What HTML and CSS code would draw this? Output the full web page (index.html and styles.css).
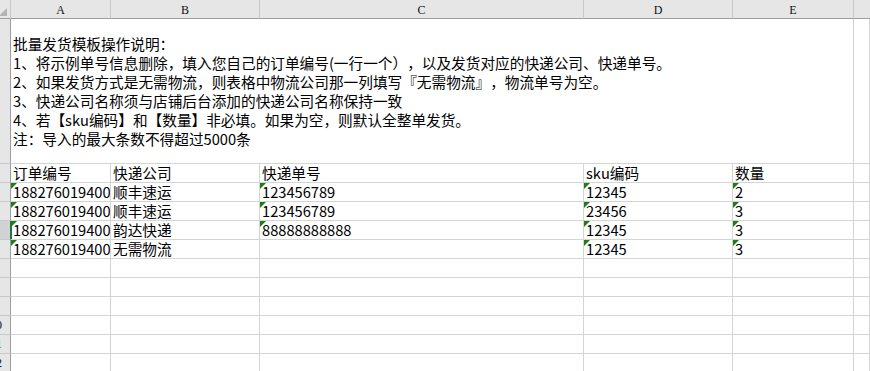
FILE: index.html
```html
<!DOCTYPE html>
<html lang="zh-CN">
<head>
<meta charset="utf-8">
<title>批量发货模板</title>
<link rel="stylesheet" href="styles.css">
</head>
<body>
<div class="viewport">
  <div class="sheet">
    <!-- column header row -->
    <div class="corner"><svg class="corner-tri" width="8" height="8" viewBox="0 0 8 8"><polygon points="8,0 8,8 0,8" fill="#b3b3b3"/></svg></div>
    <div class="colhead">A</div>
    <div class="colhead">B</div>
    <div class="colhead">C</div>
    <div class="colhead">D</div>
    <div class="colhead">E</div>
    <div class="colhead colhead-last"></div>

    <!-- row 1 -->
    <div class="rowhead tall">1</div>
    <div class="cell merged">
      <div class="notes">
        <div>批量发货模板操作说明：</div>
        <div>1、将示例单号信息删除，填入您自己的订单编号(一行一个），以及发货对应的快递公司、快递单号。</div>
        <div>2、如果发货方式是无需物流，则表格中物流公司那一列填写『无需物流』，物流单号为空。</div>
        <div>3、快递公司名称须与店铺后台添加的快递公司名称保持一致</div>
        <div>4、若【sku编码】和【数量】非必填。如果为空，则默认全整单发货。</div>
        <div>注：导入的最大条数不得超过5000条</div>
      </div>
    </div>
    <div class="cell"></div>

    <!-- row 2 -->
    <div class="rowhead">2</div>
    <div class="cell">订单编号</div>
    <div class="cell">快递公司</div>
    <div class="cell">快递单号</div>
    <div class="cell">sku编码</div>
    <div class="cell">数量</div>
    <div class="cell"></div>

    <!-- row 3 -->
    <div class="rowhead">3</div>
    <div class="cell txt">188276019400</div>
    <div class="cell">顺丰速运</div>
    <div class="cell txt">123456789</div>
    <div class="cell txt">12345</div>
    <div class="cell txt">2</div>
    <div class="cell"></div>

    <!-- row 4 -->
    <div class="rowhead">4</div>
    <div class="cell txt">188276019400</div>
    <div class="cell">顺丰速运</div>
    <div class="cell txt">123456789</div>
    <div class="cell txt">23456</div>
    <div class="cell txt">3</div>
    <div class="cell"></div>

    <!-- row 5 (active) -->
    <div class="rowhead active">5</div>
    <div class="cell txt active-cell">188276019400</div>
    <div class="cell">韵达快递</div>
    <div class="cell txt">88888888888</div>
    <div class="cell txt">12345</div>
    <div class="cell txt">3</div>
    <div class="cell"></div>

    <!-- row 6 -->
    <div class="rowhead">6</div>
    <div class="cell txt">188276019400</div>
    <div class="cell">无需物流</div>
    <div class="cell"></div>
    <div class="cell txt">12345</div>
    <div class="cell txt">3</div>
    <div class="cell"></div>

    <div class="rowhead">7</div>
    <div class="cell"></div><div class="cell"></div><div class="cell"></div><div class="cell"></div><div class="cell"></div><div class="cell"></div>
    <div class="rowhead">8</div>
    <div class="cell"></div><div class="cell"></div><div class="cell"></div><div class="cell"></div><div class="cell"></div><div class="cell"></div>
    <div class="rowhead">9</div>
    <div class="cell"></div><div class="cell"></div><div class="cell"></div><div class="cell"></div><div class="cell"></div><div class="cell"></div>
    <div class="rowhead">10</div>
    <div class="cell"></div><div class="cell"></div><div class="cell"></div><div class="cell"></div><div class="cell"></div><div class="cell"></div>
    <div class="rowhead">11</div>
    <div class="cell"></div><div class="cell"></div><div class="cell"></div><div class="cell"></div><div class="cell"></div><div class="cell"></div>
    <div class="rowhead">12</div>
    <div class="cell"></div><div class="cell"></div><div class="cell"></div><div class="cell"></div><div class="cell"></div><div class="cell"></div>
  </div>
</div>
</body>
</html>
```
FILE: styles.css
```css
* {
  box-sizing: border-box;
}

html, body {
  margin: 0;
  padding: 0;
  background: #ffffff;
}

.viewport {
  width: 870px;
  height: 371px;
  overflow: hidden;
}

.sheet {
  margin-left: -18px;
  width: 888px;
  display: grid;
  grid-template-columns: 29px 100px 149px 324px 149px 121px 1fr;
  grid-template-rows: 19px 145px repeat(11, 19px);
  font-family: "Noto Sans CJK SC", "Noto Sans", sans-serif;
  font-size: 14.67px;
  color: #000000;
  text-spacing-trim: space-all;
  text-autospace: no-autospace;
  font-kerning: none;
}

.corner {
  background: #e6e6e6;
  border-right: 1px solid #c8c8c8;
  border-bottom: 1px solid #9e9e9e;
  display: flex;
  justify-content: flex-end;
  align-items: flex-end;
  padding: 0 3px 2px 0;
}

.corner-tri {
  display: block;
}

.colhead {
  background: #e6e6e6;
  border-right: 1px solid #c8c8c8;
  border-bottom: 1px solid #9e9e9e;
  font-family: "Liberation Serif", "DejaVu Serif", serif;
  font-size: 12px;
  line-height: 13px;
  padding-top: 4px;
  text-align: center;
  color: #111111;
}

.colhead-last {
  border-right: none;
}

.rowhead {
  background: #e6e6e6;
  border-right: 1px solid #9e9e9e;
  border-bottom: 1px solid #c8c8c8;
  font-family: "Liberation Serif", "DejaVu Serif", serif;
  font-size: 12px;
  line-height: 18px;
  text-align: center;
  color: #111111;
  overflow: hidden;
}

.rowhead.tall {
  display: flex;
  align-items: center;
  justify-content: center;
}

.rowhead.active {
  background: #d2d2d2;
  border-right-color: #217346;
}

.cell {
  position: relative;
  border-right: 1px solid #d4d4d4;
  border-bottom: 1px solid #d4d4d4;
  padding: 0 0 0 2px;
  line-height: 18px;
  white-space: nowrap;
  overflow: hidden;
}

.merged {
  grid-column: 2 / 7;
  display: flex;
  align-items: center;
  overflow: visible;
}

.notes {
  line-height: 19px;
}

.txt::before {
  content: "";
  position: absolute;
  left: 0;
  top: 0;
  width: 0;
  height: 0;
  border-top: 6px solid #1b7d1b;
  border-right: 6px solid transparent;
}

.active-cell {
  box-shadow: inset 1px 0 0 #217346;
}
```
